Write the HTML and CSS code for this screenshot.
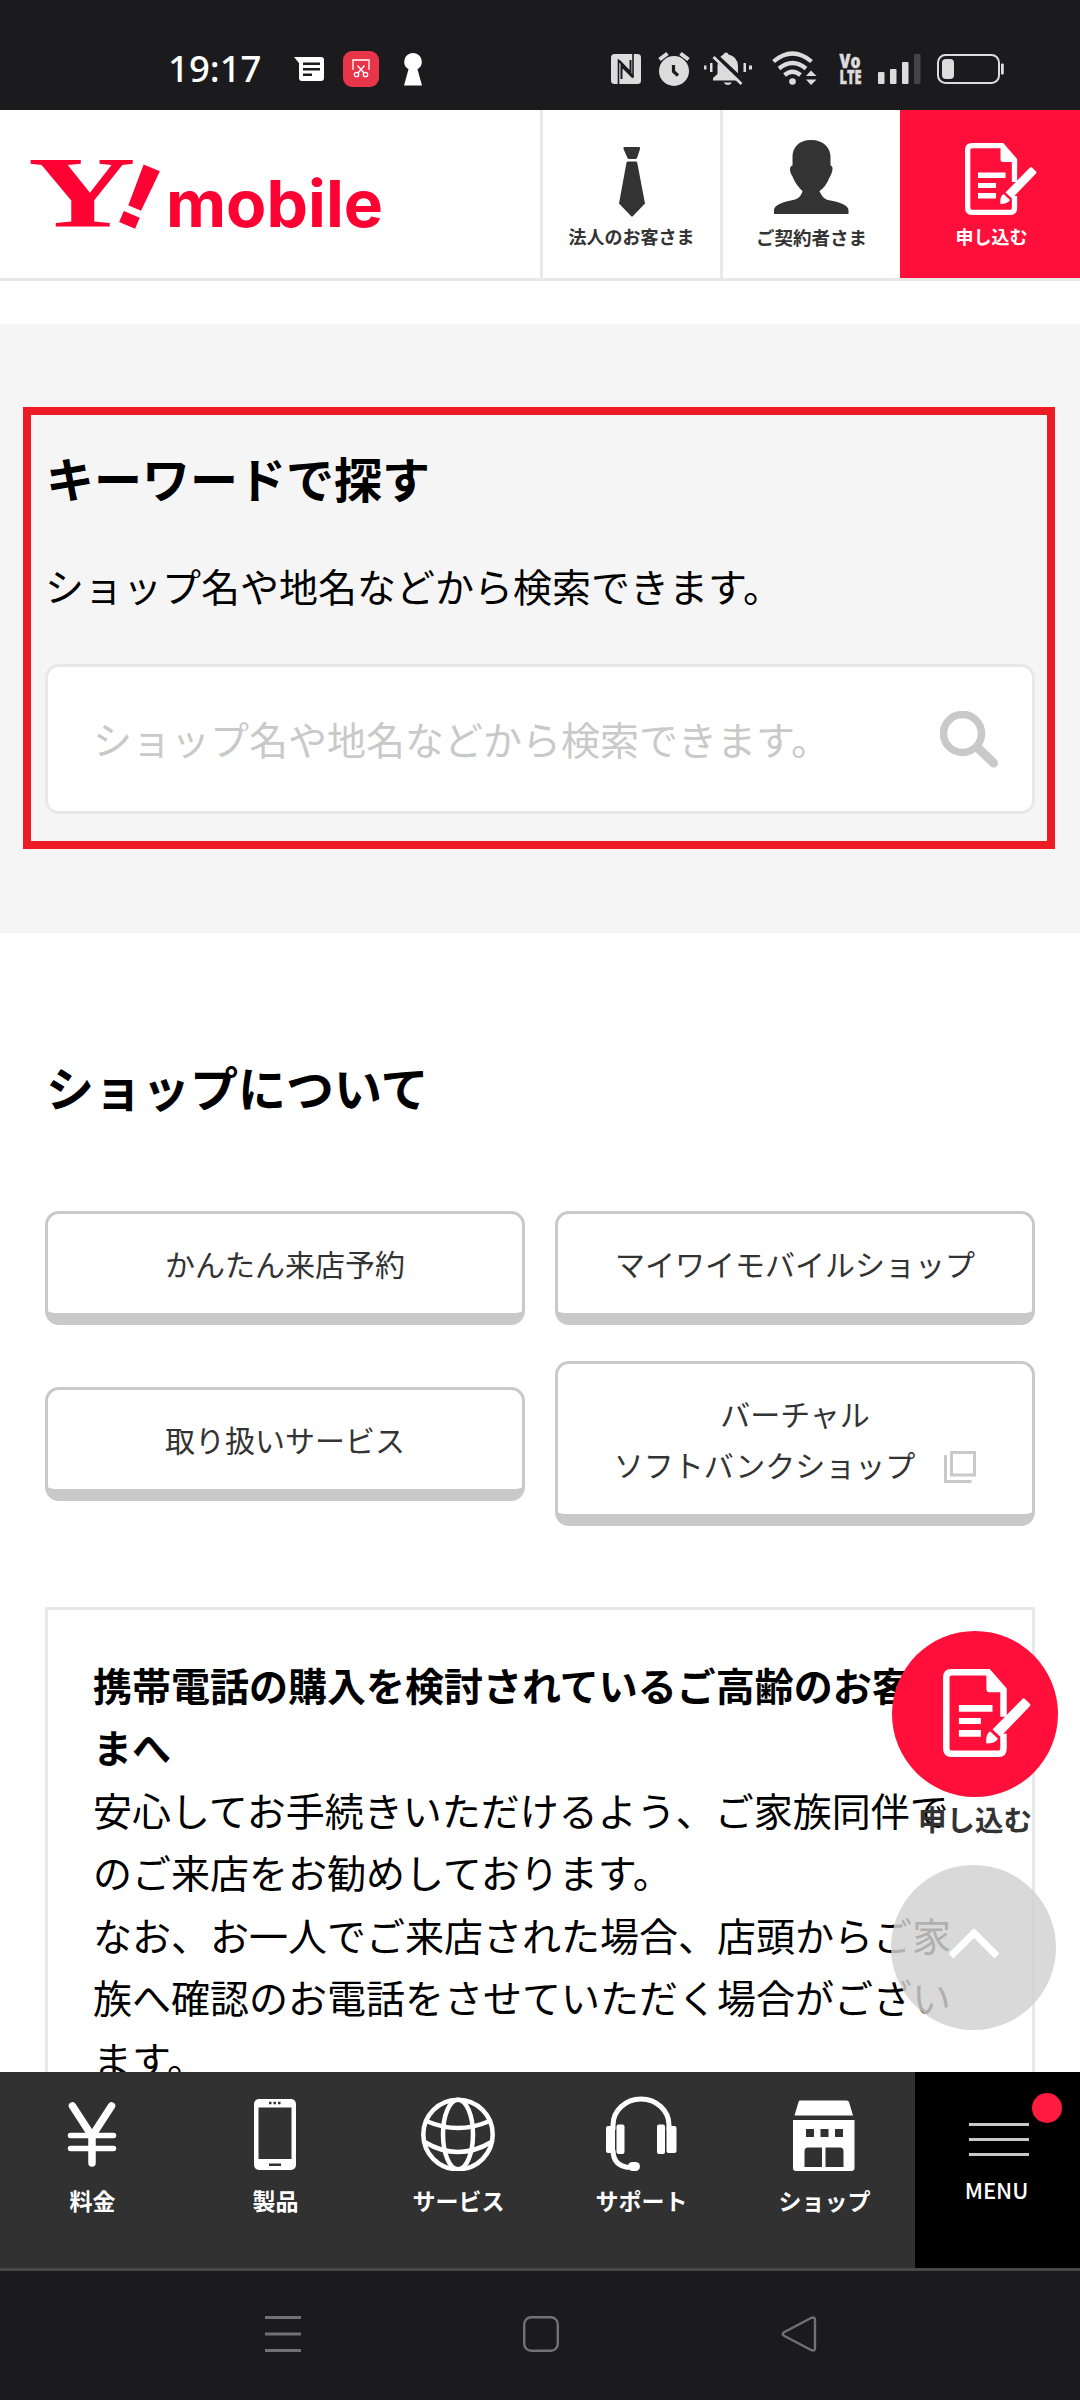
FILE: index.html
```html
<!DOCTYPE html>
<html lang="ja">
<head>
<meta charset="utf-8">
<title>Y!mobile ショップ</title>
<link rel="stylesheet" href="styles.css">
</head>
<body>
<svg class="defs" width="0" height="0" aria-hidden="true">
  <symbol id="apply" viewBox="0 0 72 72">
    <path d="M49.5 39V17L37 2.700H7Q2.700 2.700 2.700 7V65Q2.700 69.300 7 69.300H45.500Q49.500 69.300 49.500 65V53" fill="none" stroke="currentColor" stroke-width="5.300"/>
    <path d="M35.500 2L52 19H38Q35.500 19 35.500 16.500ZM13 29.500H40.500V35H13ZM13 40H31V45H13ZM13 50H31V55.500H13Z" fill="currentColor"/>
    <path d="M65 24.500Q66 23.500 67 24.500L71 28.500Q72 29.500 71 30.500L47 55.500L40.500 49.500ZM38.500 51L45 57Q42.500 61 35.500 61Q34.500 54 38.500 51Z" fill="currentColor"/>
  </symbol>
</svg>

<div class="status">
  <span class="clock">19:17</span>
  <svg class="s-msg" width="30" height="24" viewBox="0 0 30 24"><path fill="#fff" fill-rule="evenodd" d="M0 0H27Q30 0 30 3V21Q30 24 27 24H8Q5 24 5 21V6ZM9 5.500V8H26V5.500ZM9 11V13.500H26V11ZM9 16.500V19H18V16.500Z"/></svg>
  <span class="s-cut"><svg width="18" height="20" viewBox="0 0 18 20" fill="none" stroke="#fff" stroke-width="1.300"><path d="M1 11V1H17V11M5.500 6.500L12 14M12.500 6.500L6 14"/><circle cx="4.500" cy="15.500" r="2.200"/><circle cx="13.500" cy="15.500" r="2.200"/></svg></span>
  <svg class="s-key" width="18" height="33" viewBox="0 0 18 33"><path fill="#fff" d="M9 0A8.800 8.800 0 0 1 13.500 16.300L18 32.500H0L4.500 16.300A8.800 8.800 0 0 1 9 0Z"/></svg>
  <span class="grow"></span>
  <svg class="s-right" width="412" height="40" viewBox="608 49 412 40" fill="#dcdcdc">
    <rect x="611" y="54" width="30" height="30" rx="3.500"/>
    <path d="M618.500 84V60.500L633 76V54" fill="none" stroke="#1b1b1d" stroke-width="1.600"/>
    <path d="M621.500 79V66L633 77.500M630.500 60V72.500L619 60.500" fill="none" stroke="#1b1b1d" stroke-width="2"/>
    <circle cx="674" cy="71" r="15"/>
    <path d="M659.500 59.500L667.500 53.500M688.500 59.500L680.500 53.500" stroke="#dcdcdc" stroke-width="4"/>
    <path d="M673.500 65V71.500L678 75.500" stroke="#1b1b1d" stroke-width="3.200" fill="none"/>
    <path d="M726 52.500Q728 52.500 728.500 54.500Q737.500 56.500 738 66V74L743 78V80.500H713V78L717.500 74V66Q718 56.500 723.500 54.500Q724 52.500 726 52.500ZM723.500 82.500H732Q728 87.500 723.500 82.500Z"/>
    <path d="M714.500 55.500L744 83" stroke="#1b1b1d" stroke-width="6"/>
    <path d="M713.500 57L741.500 84" stroke="#dcdcdc" stroke-width="2.800"/>
    <path d="M704 65.500H706.500V69.500H704ZM710 63H712.500V72H710ZM743.500 63H746V72H743.500ZM749 65.500H752V69.500H749Z"/>
    <g fill="none" stroke="#dcdcdc" stroke-width="4.200"><path d="M773.500 61.500Q792.500 45.500 811.500 61.500M779 68.500Q792.500 57.500 806 68.500M784.500 75Q792.500 68.500 800.500 75"/></g>
    <circle cx="792.500" cy="81.500" r="3.300"/>
    <path d="M806 76H816.500L811 70.500ZM806 79.500H816.500L811 85Z"/>
    <text x="839.500" y="67.800" font-size="19.500" textLength="21" lengthAdjust="spacingAndGlyphs" class="volte">Vo</text>
    <text x="839.500" y="83.800" font-size="19" textLength="22" lengthAdjust="spacingAndGlyphs" class="volte">LTE</text>
    <rect x="878" y="72" width="6.500" height="12" rx="1"/><rect x="890" y="69" width="6.500" height="15" rx="1"/><rect x="902" y="62" width="6.500" height="22" rx="1"/><rect x="914" y="54" width="6.500" height="30" rx="1" fill="#444446"/>
    <rect x="938" y="55" width="61" height="28" rx="7.500" fill="none" stroke="#dcdcdc" stroke-width="2"/>
    <rect x="942" y="59" width="12" height="20" rx="4"/>
    <rect x="1001" y="63.500" width="2.800" height="11" rx="1"/>
  </svg>
</div>

<header class="header">
  <div class="logo">
    <svg width="540" height="168" viewBox="0 110 540 168" fill="#ff0032">
      <text class="logo-y" transform="translate(28 226.500) scale(1.460 1)" font-size="102">Y</text>
      <text class="logo-x" transform="translate(127.500 225.500) rotate(23) scale(1.350 1)" x="-15.300" font-size="91">!</text>
      <text class="logo-m" x="166" y="226.500" font-size="65" textLength="217" lengthAdjust="spacingAndGlyphs">mobile</text>
    </svg>
  </div>
  <a class="tab">
    <svg class="tie" width="26" height="70" viewBox="619 147 26 70" fill="#333"><path d="M624.500 147H639Q640.500 147 640 149L637 158Q636.500 159 635.500 159H629Q628 159 627.500 158L623.500 149Q623 147 624.500 147ZM628 161.500H636Q637 161.500 637.200 162.500L645 203.500L633 216Q632 217 631 216L619 203.500L626.500 162.500Q627 161.500 628 161.500Z"/></svg>
    <span class="tab-label l1">法人のお客さま</span>
  </a>
  <a class="tab">
    <svg class="person" width="75" height="74" viewBox="774 140 75 74" fill="#333"><path d="M811 140C824 140 830.500 148 830.500 157V165.500C834 166 832.500 173 829.500 177.500C827 184 823 189 819.500 191C821 195 824 199 828 200C838 201.500 848.500 205 848.500 210V214H774V210C774 205 784 201.500 793 200C799 199 801.500 195 802.500 191C799 188 794.500 182 792.500 176.500C789.500 172 789 166 792.500 165.500V157C792.500 148 798 140 811 140Z"/></svg>
    <span class="tab-label l2">ご契約者さま</span>
  </a>
  <a class="tab tab-red">
    <svg class="doc" width="72" height="72"><use href="#apply"/></svg>
    <span class="tab-label l3">申し込む</span>
  </a>
</header>

<main class="main">
  <section class="search">
    <div class="frame">
      <h2>キーワードで探す</h2>
      <p>ショップ名や地名などから検索できます。</p>
      <div class="field"><span>ショップ名や地名などから検索できます。</span>
        <svg width="60" height="58" viewBox="0 0 60 58" fill="none" stroke="#c9c9c9"><circle cx="22.500" cy="22.500" r="19" stroke-width="7.500"/><path d="M38 37L53.500 52" stroke-width="9" stroke-linecap="round"/></svg>
      </div>
    </div>
  </section>
  <section class="shop">
    <h2>ショップについて</h2>
    <div class="grid">
      <a class="btn">かんたん来店予約</a>
      <a class="btn">マイワイモバイルショップ</a>
      <a class="btn">取り扱いサービス</a>
      <a class="btn tall"><span>バーチャル</span><span class="ext">ソフトバンクショップ<svg width="32" height="32" viewBox="0 0 32 32" fill="none" stroke="#c9c9c9" stroke-width="3"><path d="M7.500 1.500H30.500V24H7.500ZM1.500 4V30.500H27.500"/></svg></span></a>
    </div>
    <div class="notice">
      <strong>携帯電話の購入を検討されているご高齢のお客さ<br>まへ</strong><br>
      安心してお手続きいただけるよう、ご家族同伴で<br>
      のご来店をお勧めしております。<br>
      なお、お一人でご来店された場合、店頭からご家<br>
      族へ確認のお電話をさせていただく場合がござい<br>
      ます。
    </div>
  </section>
  <div class="floating">
    <div class="fab"><svg width="88" height="88"><use href="#apply"/></svg></div>
    <span class="fab-label">申し込む</span>
    <div class="top"><svg width="52" height="32" viewBox="0 0 52 32" fill="none" stroke="#fff" stroke-width="7"><path d="M3 28L26 5L49 28"/></svg></div>
  </div>
</main>

<nav class="bottom">
  <a class="item"><svg width="74" height="76" viewBox="0 0 74 76" fill="none" stroke="#fff" stroke-linecap="round"><path d="M17.500 11L37 41L56.500 11M37 41V68" stroke-width="7.500"/><path d="M15.500 40.500H58.500M15.500 53.500H58.500" stroke-width="5.500"/></svg><span>料金</span></a>
  <a class="item"><svg width="74" height="76" viewBox="0 0 74 76"><rect x="16" y="4" width="42" height="71" rx="5" fill="#fff"/><path d="M20.500 12.500H53.500V64H20.500ZM31 6.800h2.500v2.500H31ZM35.500 6.800h2.500v2.500h-2.500ZM40 6.800h2.500v2.500H40ZM31 68.500H43V71H31Z" fill="#313131"/></svg><span>製品</span></a>
  <a class="item"><svg width="74" height="76" viewBox="0 0 74 76" fill="none" stroke="#fff" stroke-width="4.500"><ellipse cx="37" cy="39.500" rx="34.700" ry="34.700"/><ellipse cx="37" cy="39.500" rx="15" ry="34.700"/><path d="M6.500 26.500Q37 39.500 67.500 26.500M3.500 47Q37 67 70.500 47"/></svg><span>サービス</span></a>
  <a class="item"><svg width="74" height="76" viewBox="0 0 74 76" fill="#fff"><path d="M9 35V30A28 26 0 0 1 65 30V35M9 55Q9 71 25 72.500" fill="none" stroke="#fff" stroke-width="5"/><rect x="2" y="31" width="9" height="27" rx="2"/><rect x="12.500" y="29.500" width="8" height="29.500" rx="2"/><rect x="53" y="29.500" width="8" height="29.500" rx="2"/><rect x="62.500" y="31" width="10" height="27" rx="2"/><rect x="24" y="67" width="12" height="9" rx="4.500"/></svg><span>サポート</span></a>
  <a class="item"><svg width="74" height="76" viewBox="0 0 74 76"><path d="M12.500 5.500H59.500Q61.500 5.500 62 7L66 20.500H7.500L11.500 7Q12 5.500 12.500 5.500ZM6 25H67.500V73Q67.500 76 64.500 76H9Q6 76 6 73Z" fill="#fff"/><path d="M19 34h8v8H19ZM33.500 34H41.500v8h-8ZM48 34h8v8H48ZM17.500 72V56Q17.500 52.500 21 52.500H35V72ZM38.500 52.500H53Q56.500 52.500 56.500 56V72H38.500Z" fill="#313131"/></svg><span>ショップ</span></a>
  <a class="menu"><i class="lines"></i><span>MENU</span><b class="dot"></b></a>
</nav>

<div class="sysnav">
  <svg width="36" height="36" viewBox="0 0 36 36"><path d="M0 1.500H36M0 18H36M0 34.500H36" stroke="#727274" stroke-width="3"/></svg>
  <svg width="36" height="36" viewBox="0 0 36 36"><rect x="1.200" y="1.200" width="33.600" height="33.600" rx="7" fill="none" stroke="#727274" stroke-width="2.400"/></svg>
  <svg width="36" height="36" viewBox="0 0 36 36"><path d="M3 16.300L30.500 1.800Q34 .5 34 4V32Q34 35.500 30.500 34.200L3 19.700Q.500 18 3 16.300Z" fill="none" stroke="#727274" stroke-width="2.400"/></svg>
</div>
</body>
</html>
```
FILE: styles.css
```css
* { box-sizing: border-box; }
body {
  margin: 0;
  width: 1080px;
  height: 2400px;
  overflow: hidden;
  display: flex;
  flex-direction: column;
  background: #fff;
  color: #000;
  font-family: "Noto Sans CJK JP", sans-serif;
}
svg { display: block; flex: none; }
.defs { position: absolute; }
h2 { margin: 0 0 0 1px; font-size: 48px; line-height: 72px; font-weight: 700; }

/* status bar */
.status {
  flex: none;
  height: 110px;
  padding: 28px 60px 0 168px;
  display: flex;
  align-items: center;
  background: #1b1b1d;
}
.clock {
  width: 126px;
  margin-top: -2px;
  color: #fff;
  font: 500 36.500px/48px "Noto Sans", sans-serif;
}
.s-cut {
  width: 36px;
  height: 36px;
  margin-left: 19px;
  display: flex;
  align-items: center;
  justify-content: center;
  border-radius: 9px;
  background: #e8354a;
}
.s-key { margin-left: 25px; }
.grow { flex: 1; }
.volte {
  font-family: "Open Sans", sans-serif;
  font-weight: 800;
  stroke: #dcdcdc;
  stroke-width: 0.500px;
}

/* header */
.header {
  flex: none;
  height: 171px;
  display: flex;
  border-bottom: 3px solid #e8e8e8;
}
.logo { width: 540px; }
.logo-y { font-family: "Liberation Serif", serif; font-weight: 700; }
.logo-x { font-family: "Liberation Sans", sans-serif; font-weight: 700; }
.logo-m { font-family: Inter, sans-serif; font-weight: 700; }
.tab {
  width: 180px;
  display: flex;
  flex-direction: column;
  align-items: center;
  border-left: 3px solid #e8e8e8;
  color: #333;
}
.tab-red { border-left: 0; background: #ff0f3a; color: #fff; }
.tie { margin-top: 37px; }
.person { margin-top: 30px; }
.doc { margin: 33px 0 0 22px; }
.tab-label { font-size: 18px; line-height: 26px; font-weight: 700; white-space: nowrap; }
.l1 { margin-top: 6px; }
.l2 { margin-top: 10px; font-size: 18.500px; }
.l3 { margin: 8px 0 0 3px; }

/* page content */
.main {
  position: relative;
  flex: none;
  height: 1791px;
  padding-top: 43px;
  overflow: hidden;
}
.search { height: 609px; padding: 83px 25px 0 23px; background: #f5f5f5; }
.frame { height: 442px; padding: 26px 12px 0 14px; border: 8px solid #ed1c24; }
.frame p { margin: 41px 0 48px; font-size: 39px; line-height: 62px; }
.field {
  height: 150px;
  padding: 0 32px 0 45px;
  display: flex;
  align-items: center;
  justify-content: space-between;
  border: 3px solid #e8e8e8;
  border-radius: 14px;
  background: #fff;
  color: #c9c9c9;
  font-size: 39px;
}
.field span { margin-top: -3px; }
.field svg { margin-top: 2px; }
.shop { padding: 117px 45px 0; }
.grid {
  margin-top: 89px;
  display: grid;
  grid-template-columns: 1fr 1fr;
  gap: 36px 30px;
  align-items: center;
}
.btn {
  height: 114px;
  display: flex;
  flex-direction: column;
  align-items: center;
  justify-content: center;
  border: 3px solid #c9c9c9;
  border-bottom-width: 12px;
  border-radius: 14px;
  color: #333;
  font-size: 30px;
  line-height: 51px;
}
.tall { height: 165px; }
.ext { display: flex; align-items: center; gap: 29px; }
.ext svg { margin-top: 5px; }
.notice {
  height: 600px;
  margin-top: 81px;
  padding: 43px 0 0 45px;
  border: 3px solid #e8e8e8;
  font-size: 39px;
  line-height: 62.400px;
  white-space: nowrap;
}

/* buttons floating above the page */
.floating {
  position: absolute;
  top: 1350px;
  right: 22px;
  width: 166px;
  display: flex;
  flex-direction: column;
  align-items: center;
}
.fab {
  width: 166px;
  height: 166px;
  padding: 38px 0 0 51px;
  border-radius: 50%;
  background: #ff0f3a;
  color: #fff;
}
.fab-label { margin-top: 3px; font-size: 28.500px; line-height: 38px; font-weight: 700; color: #333; }
.top {
  width: 165px;
  height: 165px;
  margin: 27px 3px 0 0;
  display: flex;
  align-items: center;
  justify-content: center;
  border-radius: 50%;
  background: rgba(209, 209, 209, 0.835);
}
.top svg { margin-bottom: 8px; }

/* bottom navigation */
.bottom {
  flex: none;
  height: 199px;
  display: flex;
  border-bottom: 3px solid #45484b;
  background: #313131;
  color: #fff;
}
.item {
  width: 183px;
  padding-top: 23px;
  display: flex;
  flex-direction: column;
  align-items: center;
  font-size: 23px;
  line-height: 34px;
  font-weight: 700;
}
.item span { margin: 12px 0 0 2px; }
.menu {
  position: relative;
  width: 165px;
  padding: 51px 0 0 3px;
  display: flex;
  flex-direction: column;
  align-items: center;
  background: #000;
  font-size: 22px;
  line-height: 34px;
  font-weight: 500;
}
.lines {
  width: 60px;
  height: 33px;
  background: repeating-linear-gradient(#c8c8c8 0 3px, transparent 3px 15px);
}
.menu span { margin: 16px 5px 0 0; }
.dot {
  position: absolute;
  top: 21px;
  right: 18px;
  width: 30px;
  height: 30px;
  border-radius: 50%;
  background: #ff1a40;
}

/* system navigation */
.sysnav {
  flex: 1;
  padding: 45px 263px 0 265px;
  display: flex;
  align-items: flex-start;
  justify-content: space-between;
  background: #1b1b1d;
}
```
